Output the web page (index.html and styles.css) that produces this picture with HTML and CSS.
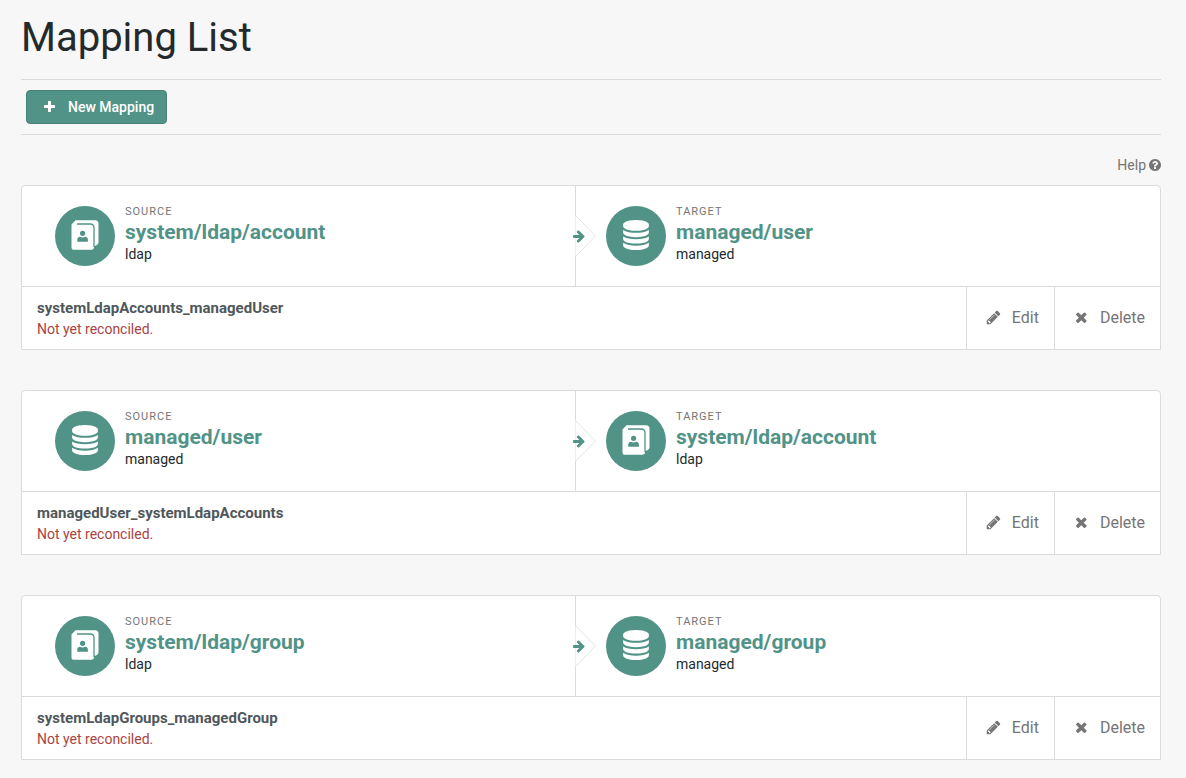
FILE: index.html
```html
<!DOCTYPE html>
<html lang="en">
<head>
<meta charset="utf-8">
<meta name="viewport" content="width=device-width, initial-scale=1">
<title>Mapping List</title>
<link rel="stylesheet" href="styles.css">
</head>
<body>
<svg class="sprite" aria-hidden="true">
  <symbol id="plus" viewBox="-64 0 1792 1792"><path d="M1600 736v192q0 40-28 68t-68 28h-416v416q0 40-28 68t-68 28h-192q-40 0-68-28t-28-68v-416h-416q-40 0-68-28t-28-68v-192q0-40 28-68t68-28h416v-416q0-40 28-68t68-28h192q40 0 68 28t28 68v416h416q40 0 68 28t28 68z"/></symbol>
  <symbol id="times" viewBox="-32 96 1792 1792"><path d="M1490 1322q0 40-28 68l-136 136q-28 28-68 28t-68-28l-294-294-294 294q-28 28-68 28t-68-28l-136-136q-28-28-28-68t28-68l294-294-294-294q-28-28-28-68t28-68l136-136q28-28 68-28t68 28l294 294 294-294q28-28 68-28t68 28l136 136q28 28 28 68t-28 68l-294 294 294 294q28 28 28 68z"/></symbol>
  <symbol id="pencil" viewBox="-64 64 1792 1792"><path d="M491 1536l91-91-235-235-91 91v107h128v128h107zm523-928q0-22-22-22-10 0-17 7l-542 542q-7 7-7 17 0 22 22 22 10 0 17-7l542-542q7-7 7-17zm-54-192l416 416-832 832h-416v-416zm683 96q0 53-37 90l-166 166-416-416 166-165q36-38 90-38 53 0 91 38l235 234q37 39 37 91z"/></symbol>
  <symbol id="question" viewBox="128 128 1536 1536"><path d="M1024 1376v-192q0-14-9-23t-23-9h-192q-14 0-23 9t-9 23v192q0 14 9 23t23 9h192q14 0 23-9t9-23zm256-672q0-88-55.5-163t-138.5-116-170-41q-243 0-371 213-15 24 8 42l132 100q7 6 19 6 16 0 25-12 53-68 86-92 34-24 86-24 48 0 85.5 26t37.5 59q0 38-20 61t-68 45q-63 28-115.5 86.5t-52.5 125.5v36q0 14 9 23t23 9h192q14 0 23-9t9-23q0-19 21.5-49.5t54.5-49.5q32-18 49-28.5t46-35 44.5-48 28-60.5 12.5-81zm384 192q0 209-103 385.5t-279.5 279.5-385.5 103-385.5-103-279.5-279.5-103-385.5 103-385.5 279.5-279.5 385.5-103 385.5 103 279.5 279.5 103 385.5z"/></symbol>
  <symbol id="database" viewBox="0 0 1792 1792"><path d="M896 768q237 0 443-43t325-127v170q0 69-103 128t-280 93.5-385 34.5-385-34.5-280-93.5-103-128v-170q119 84 325 127t443 43zm0 768q237 0 443-43t325-127v170q0 69-103 128t-280 93.5-385 34.5-385-34.5-280-93.5-103-128v-170q119 84 325 127t443 43zm0-384q237 0 443-43t325-127v170q0 69-103 128t-280 93.5-385 34.5-385-34.5-280-93.5-103-128v-170q119 84 325 127t443 43zm0-1152q208 0 385 34.5t280 93.5 103 128v128q0 69-103 128t-280 93.5-385 34.5-385-34.5-280-93.5-103-128v-128q0-69 103-128t280-93.5 385-34.5z"/></symbol>
  <symbol id="contacts" viewBox="0 0 30 30"><path d="M5.500 0.300H25a3.500 3.500 0 0 1 3.500 3.500V22q0 3-4.500 4V27q0 2.700-2.700 2.700H3.500a2 2 0 0 1-2-2V4.500z"/><path class="cut" d="M7 4H20.500a3.500 3.500 0 0 1 3.500 3.500V27"/><circle class="hole" cx="12.600" cy="13.300" r="2.600"/><path class="hole" d="M7.300 21.700v-2q0-2.600 2.600-2.900 2.700 1.500 5.400 0 2.600.3 2.600 2.900v2z"/></symbol>
  <symbol id="connector" viewBox="0 0 24 42"><path class="connector-edge" d="M2.500 0.500L22.500 21 2.500 41.500"/><path class="connector-arrow" transform="translate(-1 14) scale(.0078125)" d="M1600 960q0 54-37 91l-651 651q-39 37-91 37-51 0-90-37l-75-75q-38-38-38-91t38-91l293-293h-704q-52 0-84.500-37.500t-32.500-90.500v-128q0-53 32.500-90.500t84.500-37.500h704l-293-294q-38-36-38-90t38-90l75-75q38-38 90-38 53 0 91 38l651 651q37 35 37 90z"/></symbol>
</svg>
<main class="page">
  <h1 class="page-title">Mapping List</h1>
  <div class="toolbar">
    <button class="btn-primary" type="button"><svg class="icon-small"><use href="#plus"/></svg>New Mapping</button>
  </div>
  <div class="help-row"><a class="help" href="#help">Help<svg class="icon-help"><use href="#question"/></svg></a></div>

  <div class="mappings">
    <article class="card">
      <div class="card-body">
        <section class="resource source">
          <span class="badge"><svg class="badge-icon"><use href="#contacts"/></svg></span>
          <div class="details"><span class="label">SOURCE</span><a class="name" href="#account">system/ldap/account</a><span class="kind">ldap</span></div>
          <svg class="connector" aria-hidden="true"><use href="#connector"/></svg>
        </section>
        <section class="resource target">
          <span class="badge"><svg class="badge-icon"><use href="#database"/></svg></span>
          <div class="details"><span class="label">TARGET</span><a class="name" href="#user">managed/user</a><span class="kind">managed</span></div>
        </section>
      </div>
      <div class="card-footer">
        <div class="summary"><strong class="mapping-name">systemLdapAccounts_managedUser</strong><span class="status">Not yet reconciled.</span></div>
        <button class="action" type="button"><svg class="icon"><use href="#pencil"/></svg>Edit</button>
        <button class="action" type="button"><svg class="icon"><use href="#times"/></svg>Delete</button>
      </div>
    </article>

    <article class="card">
      <div class="card-body">
        <section class="resource source">
          <span class="badge"><svg class="badge-icon"><use href="#database"/></svg></span>
          <div class="details"><span class="label">SOURCE</span><a class="name" href="#user">managed/user</a><span class="kind">managed</span></div>
          <svg class="connector" aria-hidden="true"><use href="#connector"/></svg>
        </section>
        <section class="resource target">
          <span class="badge"><svg class="badge-icon"><use href="#contacts"/></svg></span>
          <div class="details"><span class="label">TARGET</span><a class="name" href="#account">system/ldap/account</a><span class="kind">ldap</span></div>
        </section>
      </div>
      <div class="card-footer">
        <div class="summary"><strong class="mapping-name">managedUser_systemLdapAccounts</strong><span class="status">Not yet reconciled.</span></div>
        <button class="action" type="button"><svg class="icon"><use href="#pencil"/></svg>Edit</button>
        <button class="action" type="button"><svg class="icon"><use href="#times"/></svg>Delete</button>
      </div>
    </article>

    <article class="card">
      <div class="card-body">
        <section class="resource source">
          <span class="badge"><svg class="badge-icon"><use href="#contacts"/></svg></span>
          <div class="details"><span class="label">SOURCE</span><a class="name" href="#ldap-group">system/ldap/group</a><span class="kind">ldap</span></div>
          <svg class="connector" aria-hidden="true"><use href="#connector"/></svg>
        </section>
        <section class="resource target">
          <span class="badge"><svg class="badge-icon"><use href="#database"/></svg></span>
          <div class="details"><span class="label">TARGET</span><a class="name" href="#managed-group">managed/group</a><span class="kind">managed</span></div>
        </section>
      </div>
      <div class="card-footer">
        <div class="summary"><strong class="mapping-name">systemLdapGroups_managedGroup</strong><span class="status">Not yet reconciled.</span></div>
        <button class="action" type="button"><svg class="icon"><use href="#pencil"/></svg>Edit</button>
        <button class="action" type="button"><svg class="icon"><use href="#times"/></svg>Delete</button>
      </div>
    </article>
  </div>
</main>
</body>
</html>
```
FILE: styles.css
```css
* {
  box-sizing: border-box;
}

body {
  margin: 0;
  background: #f7f7f7;
  color: #24292c;
  font-family: Roboto, sans-serif;
  font-size: 14px;
  line-height: 20px;
}

a {
  text-decoration: none;
}

button {
  font: inherit;
  cursor: pointer;
}

svg {
  flex: none;
  fill: currentColor;
}

.sprite {
  position: absolute;
  width: 0;
  height: 0;
}

.page {
  padding: 16px 25px 18px 21px;
}

.page-title {
  margin: 0 0 19px;
  font-size: 40px;
  font-weight: 400;
  line-height: 44px;
}

.toolbar {
  padding: 10px 5px;
  border-top: 1px solid #dbdbdb;
  border-bottom: 1px solid #dbdbdb;
}

.btn-primary {
  display: flex;
  align-items: center;
  gap: 12px;
  height: 34px;
  padding: 0 12px 0 15px;
  border: 1px solid #488376;
  border-radius: 4px;
  background: #519387;
  color: #fff;
  font-weight: 500;
}

.icon-small {
  width: 14px;
  height: 14px;
}

.icon-help {
  width: 12px;
  height: 12px;
}

.icon {
  width: 16px;
  height: 16px;
}

.help-row {
  display: flex;
  justify-content: flex-end;
  padding: 20px 0 10px;
}

.help {
  display: flex;
  align-items: center;
  gap: 3px;
  color: #757575;
}

.mappings {
  display: grid;
  gap: 40px;
}

.card {
  border: 1px solid #dbdbdb;
  border-radius: 4px 4px 0 0;
  background: #fff;
}

.card-body {
  display: grid;
  grid-template-columns: 1fr 1fr;
  padding-right: 30px;
}

.resource {
  display: flex;
  align-items: center;
  gap: 10px;
  min-height: 100px;
}

.source {
  position: relative;
  padding: 0 33px;
  border-right: 1px solid #dbdbdb;
}

.target {
  padding: 0 0 0 30px;
}

.badge {
  display: flex;
  flex: none;
  align-items: center;
  justify-content: center;
  width: 60px;
  height: 60px;
  padding-bottom: 2px;
  border-radius: 50%;
  background: #519387;
  color: #fff;
}

.badge-icon {
  width: 30px;
  height: 30px;
}

.details {
  display: flex;
  flex-direction: column;
  padding-bottom: 6px;
}

.label {
  color: #757575;
  font-size: 11px;
  letter-spacing: 1px;
}

.name {
  margin-bottom: 2px;
  color: #519387;
  font-size: 21px;
  font-weight: 700;
  line-height: 20px;
}

.connector {
  position: absolute;
  top: 29px;
  right: -22px;
  width: 24px;
  height: 42px;
}

.connector-edge {
  fill: #fff;
  stroke: #e4e4e4;
}

.connector-arrow {
  fill: #519387;
}

.cut {
  fill: none;
  stroke: #519387;
  stroke-width: 1.3;
}

.hole {
  fill: #519387;
}

.card-footer {
  display: flex;
  min-height: 63px;
  border-top: 1px solid #dbdbdb;
}

.summary {
  display: flex;
  flex: 1;
  flex-direction: column;
  padding: 11px 15px 9px;
}

.mapping-name {
  color: #4f575b;
  font-size: 15px;
  font-weight: 700;
  line-height: 21px;
}

.status {
  color: #a94442;
  line-height: 21px;
}

.action {
  display: flex;
  align-items: center;
  gap: 11px;
  padding: 0 15px 0 18px;
  border: 0;
  border-left: 1px solid #dbdbdb;
  background: none;
  color: #757575;
  font-size: 16px;
}
```
